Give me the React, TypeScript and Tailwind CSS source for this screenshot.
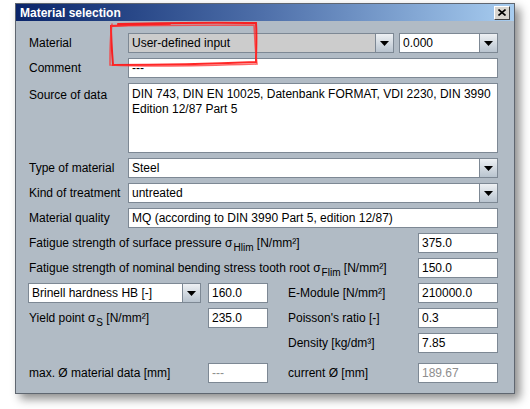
import type { ReactNode } from "react";

const BORDER = "border-[#7d8894]";

function Field({ value, className = "", muted = false }: { value: string; className?: string; muted?: boolean }) {
  return (
    <div
      className={`h-5 bg-white border ${BORDER} pl-[3px] flex items-center text-[12px] leading-none ${
        muted ? "text-[#8e8e8e]" : "text-black"
      } ${className}`}
    >
      {value}
    </div>
  );
}

function Combo({ value, className = "", gray = false }: { value: string; className?: string; gray?: boolean }) {
  return (
    <div className={`h-5 flex border ${BORDER} ${className}`}>
      <div className={`flex-1 flex items-center pl-[3px] text-[12px] leading-none ${gray ? "bg-[#cccccc]" : "bg-white"}`}>
        {value}
      </div>
      <div className={`w-[18px] border-l ${BORDER} bg-gradient-to-b from-[#eef1f4] to-[#b9c4cf] flex items-center justify-center`}>
        <svg width="9" height="5" viewBox="0 0 9 5">
          <path d="M0 0h9L4.5 5z" fill="#000" />
        </svg>
      </div>
    </div>
  );
}

function Sub({ children }: { children: ReactNode }) {
  return <span className="text-[10px] inline-block translate-y-[4px] ml-[1px]">{children}</span>;
}

function Row({ label, children }: { label: string; children: ReactNode }) {
  return (
    <div className="flex items-center">
      <div className="w-[100px] pl-[1px] text-[12px] whitespace-nowrap">{label}</div>
      {children}
    </div>
  );
}

export default function App() {
  return (
    <div className="relative w-[530px] h-[409px] bg-white font-['Liberation_Sans',Arial,sans-serif] text-black overflow-hidden">
      <div className="ml-[15px] mt-[3px] w-[500px] h-[391px] border border-[#5f6670] bg-[#b1bbc5] shadow-[5px_5px_9px_rgba(0,0,0,0.45)] flex flex-col">
        <div className="h-[17px] bg-gradient-to-r from-[#0a246a] via-[#4f70aa] to-[#a8cdf0] flex items-center justify-between pl-[4px] pr-[4px]">
          <span className="text-white font-bold text-[12px] leading-none">Material selection</span>
          <div className="w-[16px] h-[14px] bg-[#d8d5cf] border border-t-white border-l-white border-r-[#404040] border-b-[#404040] flex items-center justify-center">
            <svg width="8" height="7" viewBox="0 0 8 7">
              <path d="M0.5 0.5L7.5 6.5M7.5 0.5L0.5 6.5" stroke="#000" strokeWidth="1.6" />
            </svg>
          </div>
        </div>

        <div className="flex-1 pl-[12px] pr-[16px] pt-[12px] flex flex-col gap-[5px]">
          <Row label="Material">
            <Combo value="User-defined input" gray className="flex-1" />
            <Combo value="0.000" className="w-[99px] ml-[5px]" />
          </Row>
          <Row label="Comment">
            <Field value="---" className="flex-1" />
          </Row>
          <div className="flex items-start">
            <div className="w-[100px] pl-[1px] pt-[3px] text-[12px]">Source of data</div>
            <div className={`flex-1 h-[70px] bg-white border ${BORDER} pl-[3px] pt-[3px] text-[12px] leading-[15px]`}>
              DIN 743, DIN EN 10025, Datenbank FORMAT, VDI 2230, DIN 3990
              <br />
              Edition 12/87 Part 5
            </div>
          </div>
          <Row label="Type of material">
            <Combo value="Steel" className="flex-1" />
          </Row>
          <Row label="Kind of treatment">
            <Combo value="untreated" className="flex-1" />
          </Row>
          <Row label="Material quality">
            <Field value="MQ (according to DIN 3990 Part 5, edition 12/87)" className="flex-1" />
          </Row>

          <div className="flex items-center justify-between">
            <div className="pl-[1px] text-[12px] whitespace-nowrap">
              Fatigue strength of surface pressure σ<Sub>Hlim</Sub> [N/mm²]
            </div>
            <Field value="375.0" className="w-[80px]" />
          </div>
          <div className="flex items-center justify-between">
            <div className="pl-[1px] text-[12px] whitespace-nowrap">
              Fatigue strength of nominal bending stress tooth root σ<Sub>Flim</Sub> [N/mm²]
            </div>
            <Field value="150.0" className="w-[80px]" />
          </div>

          <div className="flex items-center">
            <Combo value="Brinell hardness HB [-]" className="w-[173px]" />
            <Field value="160.0" className="w-[60px] ml-[7px]" />
            <div className="w-[130px] ml-[20px] text-[12px]">E-Module [N/mm²]</div>
            <Field value="210000.0" className="w-[80px]" />
          </div>
          <div className="flex items-center">
            <div className="w-[173px] pl-[1px] text-[12px]">
              Yield point σ<Sub>S</Sub> [N/mm²]
            </div>
            <Field value="235.0" className="w-[60px] ml-[7px]" />
            <div className="w-[130px] ml-[20px] text-[12px]">Poisson's ratio [-]</div>
            <Field value="0.3" className="w-[80px]" />
          </div>
          <div className="flex items-center">
            <div className="w-[173px]" />
            <div className="w-[60px] ml-[7px]" />
            <div className="w-[130px] ml-[20px] text-[12px]">Density [kg/dm³]</div>
            <Field value="7.85" className="w-[80px]" />
          </div>
          <div className="flex items-center mt-[5px]">
            <div className="w-[173px] pl-[1px] text-[12px]">max. Ø material data [mm]</div>
            <Field value="---" muted className="w-[60px] ml-[7px]" />
            <div className="w-[130px] ml-[20px] text-[12px]">current Ø [mm]</div>
            <Field value="189.67" muted className="w-[80px]" />
          </div>
        </div>
      </div>

      <svg className="absolute left-0 top-0 pointer-events-none" width="530" height="409" viewBox="0 0 530 409">
        <path
          d="M118 24 C160 23 210 22 256 23 C257 36 256 50 256 62 C210 64 160 65 113 65 C112 52 111 38 111 26 C130 25 150 24 170 24"
          fill="none"
          stroke="#ff1010"
          strokeWidth="2"
          strokeLinecap="round"
          opacity="0.9"
        />
        <path
          d="M113 26 C170 25 220 25 254 25 C255 38 255 50 257 64 C200 66 150 67 110 65 C110 50 110 36 112 24"
          fill="none"
          stroke="#ff3030"
          strokeWidth="1.6"
          strokeLinecap="round"
          opacity="0.75"
        />
      </svg>
    </div>
  );
}
